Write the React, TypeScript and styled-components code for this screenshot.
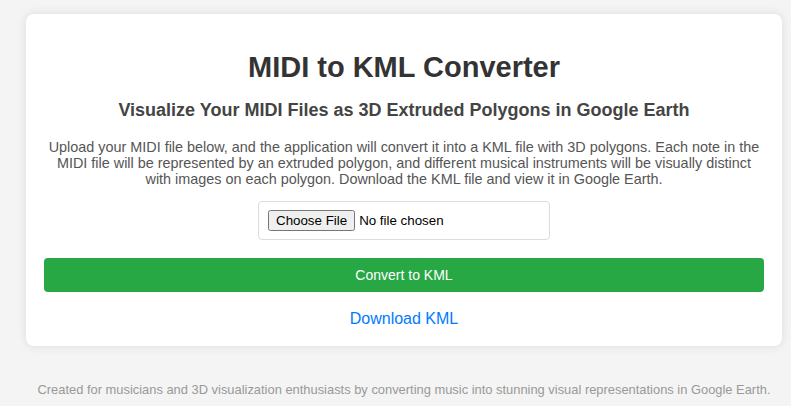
import { createGlobalStyle } from "styled-components";
import styled from "styled-components";

const GlobalStyle = createGlobalStyle`
  html, body {
    margin: 0;
    padding: 0;
    background: #f4f4f4;
    overflow: hidden;
  }
  * {
    box-sizing: border-box;
  }
`;

const Page = styled.div`
  width: 808px;
  padding: 14px 26px 0;
  font-family: "Liberation Sans", Arial, sans-serif;
`;

const Card = styled.div`
  background: #fff;
  border-radius: 8px;
  box-shadow: 0 0 10px rgba(0, 0, 0, 0.1);
  padding: 18px 18px 18px;
  text-align: center;
`;

const Title = styled.h1`
  margin: 19px 0 0;
  font-size: 29px;
  font-weight: 700;
  color: #333;
`;

const Subtitle = styled.h2`
  margin: 16px 0 0;
  font-size: 18px;
  font-weight: 700;
  color: #444;
`;

const Intro = styled.p`
  margin: 18px 0 0;
  font-size: 14.4px;
  line-height: 16px;
  color: #555;
`;

const FileBox = styled.div`
  display: inline-flex;
  margin-top: 14px;
  width: 292px;
  padding: 8px 9px;
  border: 1px solid #ddd;
  border-radius: 4px;
  background: #fff;
`;

const FileInput = styled.input`
  font-size: 13.33px;
  font-family: "Liberation Sans", Arial, sans-serif;
`;

const ConvertButton = styled.button`
  display: block;
  width: 100%;
  margin-top: 18px;
  height: 34px;
  border: none;
  border-radius: 4px;
  background: #28a745;
  color: #fff;
  font-family: "Liberation Sans", Arial, sans-serif;
  font-size: 14px;
  cursor: pointer;
`;

const DownloadLink = styled.a`
  display: inline-block;
  margin-top: 18px;
  color: #007bff;
  font-size: 16px;
  text-decoration: none;
`;

const Footer = styled.footer`
  margin-top: 36px;
  text-align: center;
  font-size: 12.9px;
  color: #999;
  white-space: nowrap;
`;

export default function App() {
  return (
    <>
      <GlobalStyle />
      <Page>
        <Card>
          <Title>MIDI to KML Converter</Title>
          <Subtitle>Visualize Your MIDI Files as 3D Extruded Polygons in Google Earth</Subtitle>
          <Intro>
            Upload your MIDI file below, and the application will convert it into a KML file with 3D
            polygons. Each note in the MIDI file will be represented by an extruded polygon, and
            different musical instruments will be visually distinct with images on each polygon.
            Download the KML file and view it in Google Earth.
          </Intro>
          <FileBox>
            <FileInput type="file" accept=".mid,.midi" />
          </FileBox>
          <ConvertButton>Convert to KML</ConvertButton>
          <DownloadLink href="#">Download KML</DownloadLink>
        </Card>
        <Footer>
          Created for musicians and 3D visualization enthusiasts by converting music into stunning
          visual representations in Google Earth.
        </Footer>
      </Page>
    </>
  );
}
